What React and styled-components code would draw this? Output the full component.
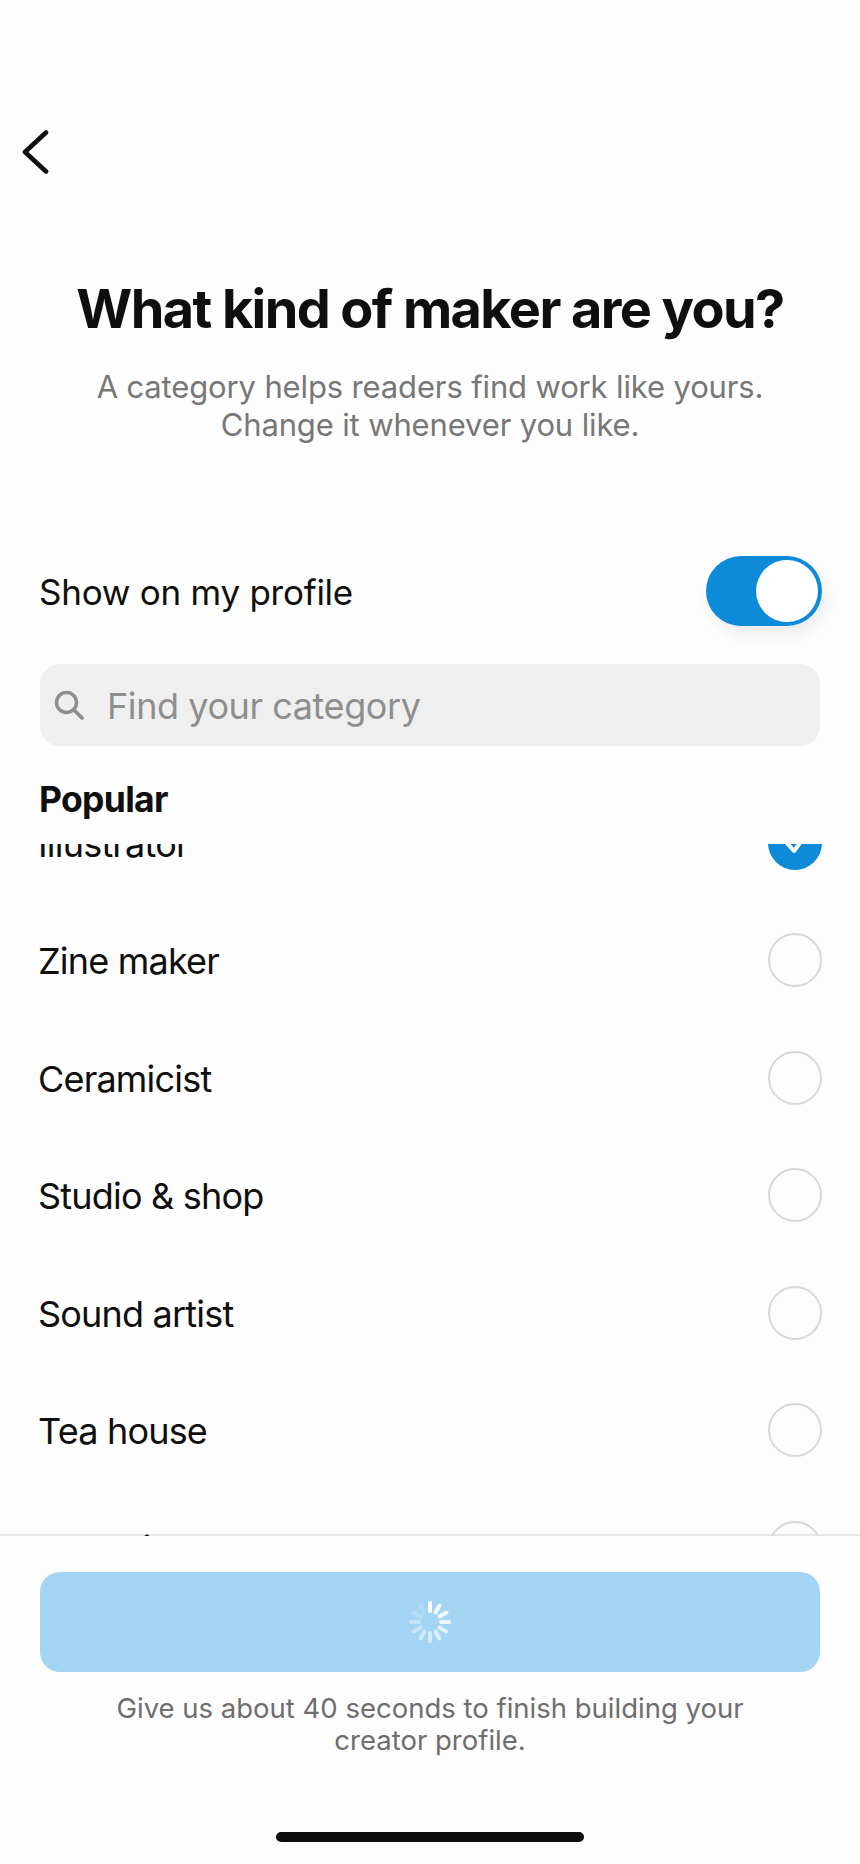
import React from "react";
import styled, { createGlobalStyle } from "styled-components";

const Global = createGlobalStyle`
  html, body { margin: 0; padding: 0; background: #fdfdfd; }
  * { box-sizing: border-box; }
  body { font-family: Inter, "Liberation Sans", sans-serif; }
`;

const Page = styled.div`
  width: 860px;
  height: 1864px;
  background: #fdfdfd;
  display: flex;
  flex-direction: column;
  overflow: hidden;
  color: #0f0f0f;
`;
const TopBar = styled.header`
  height: 130px;
  padding: 130px 0 0 21px;
  flex: none;
`;
const BackButton = styled.button`
  display: block;
  width: 28px;
  height: 44px;
  padding: 0;
  border: 0;
  background: none;
`;
const Intro = styled.section`
  flex: none;
  margin-top: 149px;
  text-align: center;
`;
const Title = styled.h1`
  margin: 0;
  font-size: 54px;
  line-height: 60px;
  font-weight: 700;
  letter-spacing: -1.6px;
  color: #0f0f0f;
`;
const Subtitle = styled.p`
  margin: 29px 0 0;
  font-size: 31px;
  line-height: 38px;
  font-weight: 400;
  letter-spacing: -0.14px;
  color: #777777;
`;
const ToggleRow = styled.div`
  flex: none;
  margin-top: 112px;
  padding: 0 38px 0 39px;
  height: 70px;
  display: flex;
  align-items: center;
  justify-content: space-between;
`;
const ToggleLabel = styled.span`
  padding-top: 2px;
  font-size: 35px;
  letter-spacing: -0.25px;
`;
const Toggle = styled.div`
  position: relative;
  width: 116px;
  height: 70px;
  border-radius: 35px;
  background: #0d8bd9;
  box-shadow: 4px 8px 14px rgba(0, 0, 0, 0.07);
`;
const Knob = styled.span`
  position: absolute;
  top: 4px;
  right: 4px;
  width: 62px;
  height: 62px;
  border-radius: 50%;
  background: #ffffff;
`;
const SearchBox = styled.div`
  flex: none;
  margin: 38px 40px 0;
  height: 82px;
  padding: 0 14px;
  border-radius: 20px;
  background: #efefef;
  display: flex;
  align-items: center;
  gap: 23px;
`;
const SearchText = styled.span`
  padding-top: 2px;
  font-size: 36px;
  letter-spacing: -0.42px;
  color: #8e8e8e;
`;
const SectionTitle = styled.h2`
  flex: none;
  margin: 32px 40px 0 39px;
  font-size: 35.5px;
  line-height: 44px;
  font-weight: 700;
  letter-spacing: -0.7px;
  color: #0f0f0f;
`;
const ListClip = styled.div`
  position: relative;
  z-index: 1;
  flex: 1;
  min-height: 0;
  margin: 22px 0 -2px;
  overflow: hidden;
`;
const List = styled.ul`
  list-style: none;
  margin: -60px 0 0;
  padding: 0 38px;
`;
const Row = styled.li`
  height: 117.5px;
  display: flex;
  align-items: center;
  justify-content: space-between;
`;
const RowLabel = styled.span`
  padding-top: 2px;
  font-size: 36px;
  letter-spacing: -0.8px;
  color: #0f0f0f;
`;
const Radio = styled.span`
  width: 54px;
  height: 54px;
  border-radius: 50%;
  display: flex;
  align-items: center;
  justify-content: center;
  border: ${(p) => (p.$on ? "0" : "2px solid #d8d8d8")};
  background: ${(p) => (p.$on ? "#0d8bd9" : "transparent")};
`;
const Footer = styled.footer`
  flex: none;
  height: 330px;
  border-top: 2px solid #e8e8e8;
  background: #fdfdfd;
  padding: 36px 40px 0;
  display: flex;
  flex-direction: column;
  align-items: center;
`;
const SubmitButton = styled.button`
  width: 100%;
  height: 100px;
  flex: none;
  border: 0;
  border-radius: 20px;
  background: #a3d5f3;
  display: flex;
  align-items: center;
  justify-content: center;
`;
const Helper = styled.p`
  margin: 20px 0 0;
  width: 700px;
  text-align: center;
  font-size: 27.5px;
  line-height: 32px;
  color: #6e6e6e;
`;
const HomeBar = styled.div`
  width: 308px;
  height: 10px;
  border-radius: 5px;
  background: #0d0d0d;
  margin-top: 76px;
  flex: none;
`;

const Chevron = () => (
  <svg width="28" height="44" viewBox="0 0 28 44" fill="none">
    <path d="M25 2.5 L4 22 L25 41.5" stroke="#0f0f0f" strokeWidth="4.6" strokeLinecap="round" strokeLinejoin="round" />
  </svg>
);
const SearchIcon = () => (
  <svg width="30" height="30" viewBox="0 0 30 30" fill="none">
    <circle cx="12.5" cy="12.5" r="10" stroke="#8e8e8e" strokeWidth="3.4" />
    <path d="M20 20 L28 28" stroke="#8e8e8e" strokeWidth="3.8" strokeLinecap="round" />
  </svg>
);
const Check = () => (
  <svg width="30" height="24" viewBox="0 0 30 24" fill="none">
    <path d="M6 11 L14 20 L25 5" stroke="#fff" strokeWidth="4" strokeLinecap="round" strokeLinejoin="round" />
  </svg>
);
const ops = [1, 0.9, 0.85, 0.8, 0.7, 0.62, 0.55, 0.48, 0.42, 0.34, 0.22, 0.12];
const Spinner = () => (
  <svg width="44" height="44" viewBox="-22 -22 44 44">
    {ops.map((o, i) => (
      <rect key={i} x="-2" y="-21" width="4" height="12" rx="2" fill="#fff" opacity={o} transform={`rotate(${i * 30})`} />
    ))}
  </svg>
);

const rows = ["Illustrator", "Zine maker", "Ceramicist", "Studio & shop", "Sound artist", "Tea house", "Bookbinder"];

export default function App() {
  return (
    <Page>
      <Global />
      <TopBar>
        <BackButton aria-label="Back"><Chevron /></BackButton>
      </TopBar>
      <Intro>
        <Title>What kind of maker are you?</Title>
        <Subtitle>
          A category helps readers find work like yours.
          <br />
          Change it whenever you like.
        </Subtitle>
      </Intro>
      <ToggleRow>
        <ToggleLabel>Show on my profile</ToggleLabel>
        <Toggle><Knob /></Toggle>
      </ToggleRow>
      <SearchBox>
        <SearchIcon />
        <SearchText>Find your category</SearchText>
      </SearchBox>
      <SectionTitle>Popular</SectionTitle>
      <ListClip>
        <List>
          {rows.map((r, i) => (
            <Row key={r}>
              <RowLabel>{r}</RowLabel>
              <Radio $on={i === 0}>{i === 0 && <Check />}</Radio>
            </Row>
          ))}
        </List>
      </ListClip>
      <Footer>
        <SubmitButton aria-label="Loading"><Spinner /></SubmitButton>
        <Helper>Give us about 40 seconds to finish building your creator profile.</Helper>
        <HomeBar />
      </Footer>
    </Page>
  );
}
